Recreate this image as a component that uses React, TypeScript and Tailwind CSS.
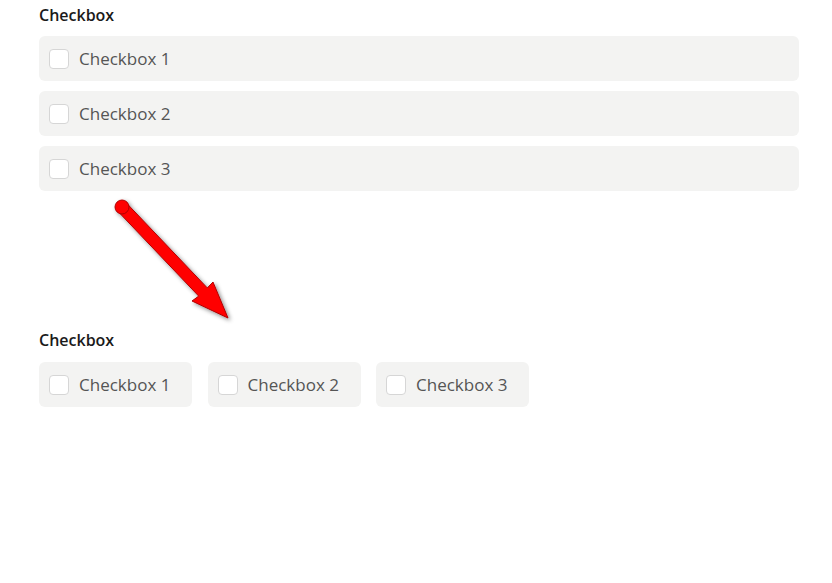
import React from 'react';

const font = { fontFamily: '"Open Sans", "Noto Sans", sans-serif' };

const items = ['Checkbox 1', 'Checkbox 2', 'Checkbox 3'];

const Box: React.FC<{ label: string; className?: string }> = ({ label, className }) => (
  <label className={`flex items-center h-[45px] rounded-[6px] bg-[#f3f3f2] pl-[10px] ${className ?? ''}`}>
    <span className="w-[20px] h-[20px] rounded-[4px] border border-[#d6d6d6] bg-white shrink-0" />
    <span className="ml-[10px] text-[17px] text-[#555555]">{label}</span>
  </label>
);

const Arrow: React.FC = () => (
  <svg className="absolute left-0 top-0 pointer-events-none" width="832" height="583">
    <defs>
      <filter id="sh" x="-20%" y="-20%" width="150%" height="150%">
        <feDropShadow dx="2" dy="2" stdDeviation="2" floodColor="#000" floodOpacity="0.45" />
      </filter>
    </defs>
    <g filter="url(#sh)" fill="#ff0000" stroke="#b00000" strokeWidth="1">
      <polygon points="126.3,202.9 207.3,287.9 213,282 228,318 192,301 198.7,296.1 117.7,211.1" />
      <circle cx="122" cy="207" r="7" />
    </g>
  </svg>
);

export default function App() {
  return (
    <div className="relative w-[832px] h-[583px] bg-white" style={font}>
      <div className="pl-[39px] pr-[33px]">
        <h3 className="h-[30px] flex items-center text-[16px] font-semibold text-[#1a1a1a]">Checkbox</h3>
        <div className="mt-[6px] flex flex-col gap-[10px]">
          {items.map((t) => (
            <Box key={t} label={t} />
          ))}
        </div>
        <div className="h-[134px]" />
        <h3 className="h-[30px] flex items-center text-[16px] font-semibold text-[#1a1a1a]">Checkbox</h3>
        <div className="mt-[7px] flex gap-[15.5px]">
          {items.map((t) => (
            <Box key={t} label={t} className="w-[153px]" />
          ))}
        </div>
      </div>
      <Arrow />
    </div>
  );
}
